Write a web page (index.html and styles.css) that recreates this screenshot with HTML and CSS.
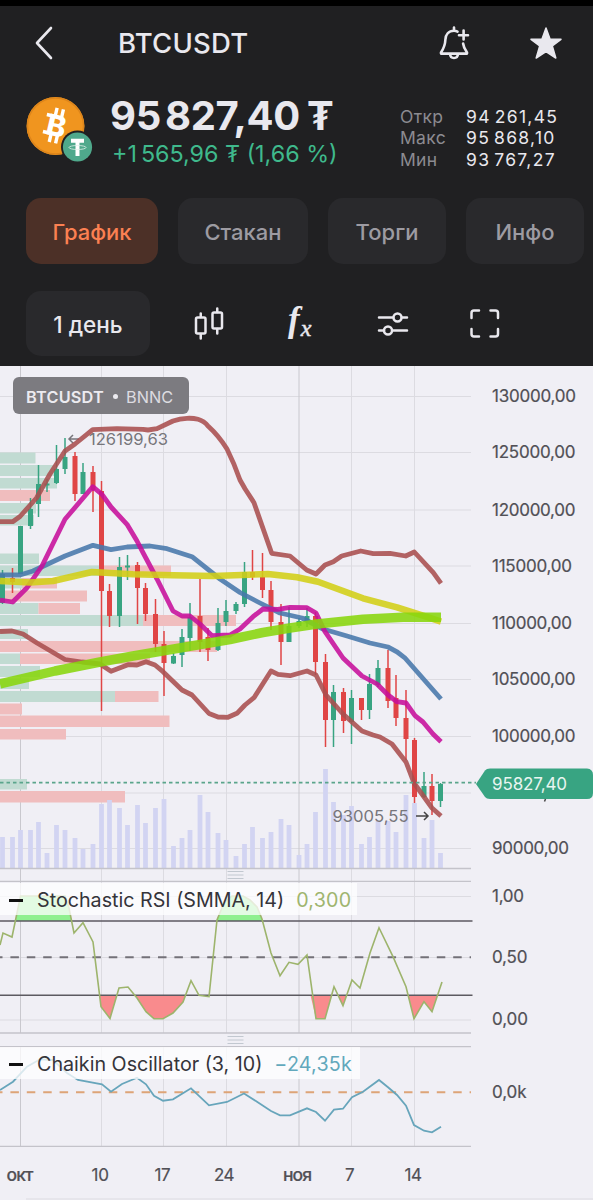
FILE: index.html
```html
<!DOCTYPE html>
<html lang="ru">
<head>
  <meta charset="UTF-8" />
  <meta name="viewport" content="width=device-width, initial-scale=1.0"/>
  <title>BTCUSDT</title>
  <link rel="stylesheet" href="styles.css">
</head>
<body>

<header class="header">
  <div class="topbar">
    <svg class="back" width="20" height="36" viewBox="0 0 20 36"><path d="M17 3L3 18L17 33"/></svg>
    <h1>BTCUSDT</h1>
    <svg class="bell" width="32" height="36" viewBox="0 0 32 36">
      <path d="M16 2.500V5M19.500 6.600C18.400 6 17.200 5.700 16 5.700C10.500 5.700 7.600 9.600 7.400 14.500C7.200 20.500 5.600 23.600 3 27.500V28.600H29V27.500C26.900 24.600 25.500 22 25.100 18.500M12 29C12.200 31.500 13.700 33 16 33C18.300 33 19.800 31.500 20 29M25.600 5.500V14.500M21 10.300H30"/>
    </svg>
    <svg class="star" width="34" height="34" viewBox="0 0 34 34"><path d="M17 2L21 13L32 13.300L23.300 20L26.800 32L17 25.500L7.200 32L10.700 20L2 13.300L13 13Z"/></svg>
  </div>

  <div class="quote">
    <svg class="coin" width="68" height="68" viewBox="0 0 68 68">
      <circle cx="29.500" cy="30" r="29" fill="#f0951f"/>
      <circle cx="29.500" cy="30" r="28" fill="none" stroke="#dd851b" stroke-width="1.500"/>
      <g transform="rotate(13 29.500 30)">
        <text class="btc" x="30.500" y="40">B</text>
        <path d="M27 12V20M33.500 12V20M27 38V47M33.500 38V47" stroke="#fff" stroke-width="3.400"/>
        <path d="M18.500 20.800H25M18.500 38.200H25" stroke="#fff" stroke-width="3.600"/>
      </g>
      <circle cx="51.500" cy="51" r="16.500" fill="#202022"/>
      <circle cx="51.500" cy="51" r="14.600" fill="#4fa98c"/>
      <path d="M45 44.800H58M51.500 44.800V60" stroke="#fff" stroke-width="4"/>
      <ellipse cx="51.500" cy="51.500" rx="8.500" ry="2" fill="none" stroke="#e3f3ee" stroke-width="0.800"/>
    </svg>
    <div class="price">
      <div class="last">95<i></i>827,40<i></i><span>₮</span></div>
      <div class="change">+1<i></i>565,96 ₮ (1,66 %)</div>
    </div>
    <dl class="stats">
      <dt>Откр</dt><dd>94<i></i>261,45</dd>
      <dt>Макс</dt><dd>95<i></i>868,10</dd>
      <dt>Мин</dt><dd>93<i></i>767,27</dd>
    </dl>
  </div>

  <nav class="tabs">
    <a class="tab tab-chart active">График</a>
    <a class="tab tab-book">Стакан</a>
    <a class="tab tab-trades">Торги</a>
    <a class="tab tab-info">Инфо</a>
  </nav>

  <div class="toolbar">
    <button class="period">1 день</button>
    <svg width="34" height="36" viewBox="0 0 34 36">
      <rect x="4" y="11.500" width="9.500" height="16" rx="1.500"/><path d="M8.750 7.500V11M8.750 28V32.500"/>
      <rect x="20.500" y="6.500" width="9.500" height="16" rx="1.500"/><path d="M25.250 2.500V6M25.250 23V27.500"/>
    </svg>
    <span class="fx"><em>f</em><sub>x</sub></span>
    <svg width="32" height="36" viewBox="0 0 32 36">
      <path d="M2 11.500H16M25 11.500H30M2 24.500H7M16 24.500H30"/><circle cx="20.500" cy="11.500" r="4"/><circle cx="11" cy="24.500" r="4"/>
    </svg>
    <svg width="32" height="36" viewBox="0 0 32 36">
      <path d="M2.500 12V7C2.500 5.500 3.500 4.500 5 4.500H10M21.500 4.500H26.500C28 4.500 29 5.500 29 7V12M29 23V28C29 29.500 28 30.500 26.500 30.500H21.500M10 30.500H5C3.500 30.500 2.500 29.500 2.500 28V23"/>
    </svg>
  </div>
</header>

<main class="chart">
  <section class="pane">
    <svg class="plot" width="593" height="516" viewBox="0 366 593 516">
      <path class="grid" d="M101.500 366V882M163.500 366V882M226.500 366V882M351.500 366V882M414.500 366V882M0 396.500H471M0 452.500H471M0 510H471M0 566H471M0 623.500H471M0 679.500H471M0 736.500H471M0 793H471M0 848.500H471"/>
      <path class="grid month" d="M20.500 366V882M299 366V882"/>

      <!-- volume profile -->
      <path class="profile up" d="M0 452.500h35.500v11h-35.500zM0 465h55v11h-55zM0 478h57v10.500h-57zM0 503h36v10.500h-36zM0 515h34v10.500h-34zM0 553.500h39v10.500h-39zM0 565.500h100v10.500h-100zM0 578h22v10.500h-22zM0 603h38.500v11h-38.500zM0 615h143v11h-143zM0 629h28v10h-28zM0 653.500h20v10.500h-20zM0 666h40v11h-40zM0 678.500h29v10.500h-29zM0 691h115v11h-115zM0 779h27v10.500h-27z"/>
      <path class="profile down" d="M0 490h50v11h-50zM100 565.500h71v10.500h-71zM22 578h35v10.500h-35zM0 590.500h87v11h-87zM38.500 603h41.500v11h-41.500zM143 615h93v11h-93zM0 641h217v11h-217zM20 653.500h130v10.500h-130zM115 691h43.500v11h-43.500zM0 703.500h22v11h-22zM0 715.500h169.500v11.500h-169.500zM0 729h66v10.500h-66zM0 791h125v11.500h-125z"/>

      <!-- volume -->
      <path class="volume" d="M2.500 868V837M12.500 868V837M20.500 868V830M30.500 868V830M38.500 868V822M47 868V853M56.500 868V825M65 868V830M75 868V838M83 868V849M93 868V844M101.500 868V804M109.500 868V800M119.500 868V808M127.500 868V825M137.500 868V805M145.500 868V823M155.500 868V808M164 868V799M173.500 868V846M182 868V838M190 868V830M200 868V795M208 868V812M218 868V833M226 868V840M236 868V856M244.500 868V844M252.500 868V827M262.500 868V838M271 868V832M281 868V819M289 868V825M299 868V855M307 868V844M315.500 868V812M325.500 868V769M333.500 868V802M343.500 868V815M351.500 868V806M361.500 868V844M369.500 868V837M378 868V821M388 868V821M396 868V832M406 868V795M414.500 868V803M424 868V838M432 868V820M440.500 868V853"/>

      <!-- candles -->
      <path class="wick up" d="M2.500 570V604M30.500 498V529M38.500 465V517M47 479V492M56.500 445V484M65 438V474M83 463V494M119.500 557V627M127.500 555V580M173.500 653V664M182 629V667M190 603V651M218 608V651M226 600V626M236 602V614M244.500 562V607M289 607V642M299 618V628M307 608V627M333.500 685V747M351.500 690V744M369.500 674V719M378 660V687M424 772V798M440.500 783V807"/>
      <path class="body up" d="M2.500 574V603M20.500 526V574M30.500 509V526M38.500 484V504M47 483.500V485.500M56.500 469V483M65 457V469M83 472V494M119.500 567V616M127.500 565.500V567.500M173.500 656V663.500M182 637V655M190 617V638M218 623V650M226 611V622M236 604V611M244.500 572V604M289 626V642M299 621V626M307 616V621M333.500 692V720M351.500 698V722M369.500 684V710M378 668V685M424 786V797M440.500 784V801"/>
      <path class="wick down" d="M12.500 568V593M75 452V501M93 466V512M101.500 481V711M109.500 584V627M137.500 562V624M145.500 583V621M155.500 599V652M164 631V696M200 579V652M208 628V661M252.500 550V580M262.500 553V598M271 581V630M281 604V665M315.500 612V675M325.500 654V747M343.500 688V733M361.500 698V720M388 650V708M396 675V726M406 690V760M414.500 738V803M432 774V815"/>
      <path class="body down" d="M12.500 578V582M75 456V494M93 472V490M101.500 491V591M109.500 591V616M137.500 565V588M145.500 588V614M155.500 614V644M164 644V663M200 616V642M208 637V650M252.500 572V577M262.500 577V590M271 590V622M281 622V642M315.500 616V662M325.500 662V720M343.500 692V721M361.500 698V710M388 668V701M396 698V718M406 718V739M414.500 740V797M432 786V801"/>

      <!-- high / low marks -->
      <text class="mark" x="89" y="445" textLength="79" lengthAdjust="spacingAndGlyphs">126199,63</text>
      <path class="arrow" d="M79 439H69M73 435L69 439L73 443"/>
      <text class="mark" x="332.500" y="821.500" textLength="76" lengthAdjust="spacingAndGlyphs">93005,55</text>
      <path class="arrow dark" d="M416 816H428M424 812L428 816L424 820"/>

      <!-- bands and averages -->
      <path class="band" d="M0 521.700L12.700 521.700L20 516.500L36.500 498L50 474L65 451L75 444L92.700 429.700L117 428.700L143 429.300L148 430L157 428.700L173 421Q180 418.500 187 418.300Q193 418 198 419.300Q204 421 208 426Q219 436 227 449Q234 463 240 480L245 488.700L254 502.700L271.700 553.300L290 556L306.700 570L316 574L325 565L333.300 561.700L341.700 556L360.700 551L373.300 553.700L390 553.300L405.700 556L414.300 552L433.300 572.700L441 583.300"/>
      <path class="band" d="M0 631.500L12 631L23 634L37 643L65 659.500L82 662L100 664L111 671.300L128 664.700L137 665L146 661.700L155 665L163 671.700L182 690L192 695L209 713.500L218 717L228 717.300L237 713.300L245 705L254 697.700L271 671L278 674.300L290 675.700L307 671L316 675L326 695L343 714L362 731L373 735L380 737L392 744L406 762L414 783L432 808L441 816"/>
      <path class="ma-blue" d="M0 575H20L33 571L65 556L93 545.300L111 549.700L127 547L150 546L167 548.700L192 556.700L220 579L240 592.500L260 603L280 613L302 618L323 629L347 636L370 643L388 647Q397 651 405 658L441 699"/>
      <path class="ma-magenta" d="M0 600L12.700 602L27 587.700L42 566L65 519.300L92.700 486.700L102 494.300L111 507L127 524.300L137 541L143 552.700L157 579L173 611L182 616L190 616L200 624L212 635.700L230 635L240 629L253 616.700L263 609L278 609.300L290 607.300L307 607.700L316 613L325 631.700L343 658L362 676L377 684L388 695L397 701.700L406 703L415 715.700L423 722L433 734L441 741.700"/>
      <path class="ma-yellow" d="M0 581L30 582.500L53 581L92 572L133 574.300L173 575.300L213 576L268 574L297 577.300L318 581.700L363 598.300L397 607.300L423 615.700L441 621.700"/>
      <path class="ma-green" d="M0 684L55 671L100 662L133 656L187 646.700L230 639.500L263 632.500L290 628L317 624L363 619.300L403 617.300L441 617.300"/>

      <path class="last-line" d="M0 782.700H476"/>
      <path class="border" d="M0 868.500H471M0 881.500H471"/>
      <path class="handle" d="M227.500 871.500H243.500M227.500 875H243.500M227.500 878.500H243.500"/>

      <g class="axis">
        <text x="492" y="402" textLength="84">130000,00</text>
        <text x="492" y="458" textLength="83.500">125000,00</text>
        <text x="492" y="515.500" textLength="83.500">120000,00</text>
        <text x="492" y="571.500" textLength="80">115000,00</text>
        <text x="492" y="629" textLength="80">110000,00</text>
        <text x="492" y="685" textLength="83.500">105000,00</text>
        <text x="492" y="742" textLength="83.500">100000,00</text>
        <text x="492" y="854" textLength="77">90000,00</text>
      </g>
      <path class="tag" d="M476 784L485 770.500Q486.500 768.500 490 768.500H587Q593 769 593 775V793Q593 799 587 799H490Q486.500 799 485 797Z"/>
      <path class="arrow dark" d="M545.500 799L544.500 801.500"/>
      <text class="tag-text" x="492" y="790" textLength="75">95827,40</text>
    </svg>
    <div class="symbol"><b>BTCUSDT</b><span class="dot"></span>BNNC</div>
  </section>

  <section class="pane">
    <svg class="plot" width="593" height="164" viewBox="0 882 593 164">
      <path class="grid" d="M101.500 882V1033M163.500 882V1033M226.500 882V1033M351.500 882V1033M414.500 882V1033M0 896.500H471M0 957.500H471M0 1020H471"/>
      <path class="grid month" d="M20.500 882V1033M299 882V1033"/>
      <clipPath id="over"><rect x="0" y="882" width="480" height="39"/></clipPath>
      <clipPath id="under"><rect x="0" y="995" width="480" height="40"/></clipPath>
      <path class="overbought" clip-path="url(#over)" d="M0 921V945L3 933L12 937L17 913L20.500 896H65L69 908L74 933L83 923V940H209L217 920L224 903L232 896H243L250 900L257 907L262 919L271 953V921Z"/>
      <path class="oversold" clip-path="url(#under)" d="M93 942L101 1006.700L110 1018.500L119 988L128 987L137 998L146 1011.700L154 1018.700H163L173 1013L183 1002L191 980.700H307L316 1018.700H325L334 986.700L343 1005.700L352 980H404L414 1018.700L424 1001.700L432 1011.700L442 982V942Z"/>
      <path class="level" d="M0 921H472.500M0 995.300H472.500"/>
      <path class="level mid" d="M-6 957.200H471"/>
      <path class="rsi" d="M0 945L3 933L12 937L17 913L20.500 896H65L69 908L74 933L83 922.700L93 942L101 1006.700L110 1018.500L119 988L128 987L137 998L146 1011.700L154 1018.700H163L173 1013L183 1002L191 980.700L199 995.300L209 996.700L217 920L224 903L232 896H243L250 900L257 907L262 919L271 953L280 975.700L289 962.300L298 964.300L307 955L316 1018.700H325L334 986.700L343 1005.700L352 980L360 988L370 953L379 927.700L393 956.700L406 986.700L414 1018.700L424 1001.700L432 1011.700L442 982"/>
      <path class="border" d="M0 1033H471"/>
      <path class="handle" d="M227.500 1036.500H243.500M227.500 1040H243.500M227.500 1043.500H243.500"/>
      <g class="axis">
        <text x="492" y="901.500" textLength="32">1,00</text>
        <text x="492" y="962.500" textLength="35.500">0,50</text>
        <text x="492" y="1025" textLength="36">0,00</text>
      </g>
    </svg>
    <div class="legend legend-rsi"><span class="dash"></span><span class="name">Stochastic RSI (SMMA, 14)</span><span class="value">0,300</span></div>
  </section>

  <section class="pane">
    <svg class="plot" width="593" height="101" viewBox="0 1046 593 101">
      <path class="grid" d="M101.500 1046V1146M163.500 1046V1146M226.500 1046V1146M351.500 1046V1146M414.500 1046V1146"/>
      <path class="grid month" d="M20.500 1046V1146M299 1046V1146"/>
      <path class="zero" d="M-6 1092.200H471"/>
      <path class="chaikin" d="M0 1090L13 1081.700L27 1066.700L40 1059.300L53 1060L67 1073L78 1080L102 1084.300L111 1091.700L122 1084L137 1077.700L146 1084.300L154 1095.700L163 1100.700L173 1099.300L191 1088.300L209 1105.300L227 1102L244 1093.500L257 1101.700L271 1111L280 1115.300H290L307 1108.300L316 1112L325 1120.700L334 1109.700L343 1108.700L352 1097.300L363 1091.700L379 1080L388 1087.300L397 1095L406 1105.700L414 1125L424 1130.700L432 1132.300L441 1126.700"/>
      <path class="border" d="M0 1046.500H471M0 1146.500H471"/>
      <g class="axis"><text x="492" y="1098" textLength="34.500">0,0k</text></g>
    </svg>
    <div class="legend legend-chaikin"><span class="dash"></span><span class="name">Chaikin Oscillator (3, 10)</span><span class="value">−24,35k</span></div>
  </section>

  <svg class="plot dates" width="593" height="53" viewBox="0 1147 593 53">
    <g class="axis">
      <text class="strong" x="6.500" y="1181" textLength="27">окт</text>
      <text x="91.500" y="1180.500" textLength="17.500">10</text>
      <text x="154.500" y="1180.500" textLength="16">17</text>
      <text x="214" y="1180.500" textLength="20.500">24</text>
      <text class="strong" x="283" y="1181" textLength="29">ноя</text>
      <text x="345" y="1180.500">7</text>
      <text x="404.500" y="1180.500" textLength="17.500">14</text>
    </g>
    <path class="grid" d="M26 1199H593"/>
  </svg>
</main>

</body>
</html>
```
FILE: styles.css
```css
* {
  box-sizing: border-box;
}
body {
  margin: 0;
  width: 593px;
  font-family: Inter, "Liberation Sans", sans-serif;
  background: #f0eff5;
}
svg {
  display: block;
  flex: none;
}

/* header */
.header {
  height: 366px;
  border-top: 6px solid #000;
  background: #202022;
  color: #e9e8ee;
}
.topbar {
  display: flex;
  align-items: center;
  height: 74px;
  padding: 0 29px 0 34px;
}
.topbar path {
  fill: none;
  stroke: #e9e8ee;
  stroke-width: 2.6;
  stroke-linecap: round;
  stroke-linejoin: round;
}
.topbar .star {
  margin-left: 59px;
}
.topbar .star path {
  fill: #e9e8ee;
  stroke-width: 1.5;
}
.topbar h1 {
  flex: none;
  width: 320px;
  margin: 0 0 0 64px;
  font-size: 27.500px;
  font-weight: 500;
  letter-spacing: 0.2px;
}
.quote {
  display: flex;
  height: 90px;
  padding: 16px 0 0 26px;
}
.btc {
  font-size: 29px;
  font-weight: 800;
  fill: #fff;
  text-anchor: middle;
}
.price {
  width: 290px;
  margin-left: 16px;
  white-space: nowrap;
}
.price i,
.stats i {
  display: inline-block;
  width: 4px;
}
.last {
  height: 40px;
  line-height: 40px;
  font-size: 40px;
  font-weight: 700;
  letter-spacing: -0.3px;
}
.last i + span {
  margin-left: 3px;
}
.change {
  margin-left: 2px;
  line-height: 36px;
  font-size: 23.300px;
}
.change {
  color: #3fb98c;
}
.stats {
  display: grid;
  grid-template-columns: 66px auto;
  align-content: start;
  margin: 10px 0 0;
  line-height: 21.300px;
  font-size: 17.500px;
  white-space: nowrap;
}
.stats dt {
  color: #8c8b91;
  letter-spacing: 0.3px;
}
.stats dd {
  margin: 0;
  letter-spacing: 1.300px;
}
.tabs {
  display: flex;
  gap: 20px;
  padding: 28px 9px 0 26px;
}
.tab {
  display: flex;
  align-items: center;
  justify-content: center;
  width: 118px;
  height: 66px;
  padding-top: 2px;
  border-radius: 15px;
  background: #29292c;
  color: #9d9ba2;
  font-size: 22px;
  font-weight: 500;
}
.tab-chart {
  width: 132px;
}
.tab-book {
  width: 130px;
}
.tab.active {
  background: #4c3027;
  color: #fb8052;
}
.toolbar {
  display: flex;
  align-items: center;
  height: 65px;
  margin-top: 27px;
  padding-left: 26px;
}
.period {
  width: 124px;
  height: 65px;
  margin-right: 42px;
  padding: 2px 0 0;
  border: none;
  border-radius: 15px;
  background: #29292c;
  color: #e9e8ee;
  font: 500 22.500px Inter, sans-serif;
}
.toolbar svg {
  fill: none;
  stroke: #e9e8ee;
  stroke-width: 2.500;
  stroke-linecap: round;
}
.fx {
  width: 30px;
  margin: 0 59px 0 62px;
  font-family: "Liberation Serif", serif;
  font-style: italic;
  font-weight: 700;
  line-height: 36px;
  white-space: nowrap;
}
.fx em {
  font-size: 35px;
}
.fx sub {
  margin-left: 1px;
  font-size: 24px;
  font-weight: 400;
  -webkit-text-stroke: 0.5px #e9e8ee;
  vertical-align: -5px;
}
.toolbar svg:last-child {
  margin-left: 60px;
}

/* chart */
.pane {
  position: relative;
}
.plot path {
  fill: none;
}
.plot .grid {
  stroke: #dcdbe1;
}
.plot .grid.month {
  stroke: #c9c8ce;
}
.plot .border {
  stroke: #c4c3ca;
  stroke-width: 1.300;
}
.plot .handle {
  stroke: #c2c8d0;
}
.plot .profile.up {
  fill: #c1dbd2;
}
.plot .profile.down {
  fill: #f0bdbe;
}
.plot .volume {
  stroke: #d2d4f2;
  stroke-width: 4.800;
}
.plot .wick {
  stroke-width: 1.500;
}
.plot .body {
  stroke-width: 5;
}
.plot .up {
  stroke: #38a482;
}
.plot .down {
  stroke: #e04545;
}
.plot .profile {
  stroke: none;
}
.band,
.ma-blue,
.ma-magenta,
.ma-yellow,
.ma-green {
  stroke-linejoin: round;
  stroke-width: 4.800;
  opacity: 0.88;
}
.band {
  stroke: #a94f4f;
}
.ma-blue {
  stroke: #4777ab;
}
.ma-magenta {
  stroke: #c60f9b;
}
.plot .ma-yellow {
  stroke: #d2cf16;
  stroke-width: 6.500;
}
.plot .ma-green {
  stroke: #88d60c;
  stroke-width: 9.500;
}
.mark {
  font-size: 16.500px;
  fill: #77767b;
}
.arrow {
  stroke: #77767b;
  stroke-width: 1.500;
}
.arrow.dark {
  stroke: #444;
}
.last-line {
  stroke: #5aa58b;
  stroke-width: 1.800;
  stroke-dasharray: 3.500 3;
}
.axis text {
  font-size: 17px;
  fill: #515056;
  stroke: #515056;
  stroke-width: 0.200;
}
.axis .strong {
  font-size: 17.500px;
  font-weight: 500;
}
.plot .tag {
  fill: #38a482;
}
.tag-text {
  font-size: 17px;
  fill: #e8f5f0;
}
.symbol {
  position: absolute;
  left: 13px;
  top: 11px;
  display: flex;
  align-items: center;
  width: 176px;
  height: 37px;
  padding: 2px 0 0 13px;
  border-radius: 6px;
  background: #7c7b80;
  color: #dddce1;
  font-size: 16.300px;
}
.symbol b {
  font-weight: 600;
  letter-spacing: 0.200px;
  color: #ecebf0;
}
.dot {
  width: 5px;
  height: 5px;
  margin: 0 8px 0 9px;
  border-radius: 50%;
  background: #ecebf0;
}
.plot .overbought {
  fill: #8ff08f;
}
.plot .oversold {
  fill: #f98b8d;
}
.level {
  stroke: #5c5a61;
  stroke-width: 1.600;
}
.level.mid {
  stroke: #737178;
  stroke-width: 1.900;
  stroke-dasharray: 8.500 7.900;
}
.rsi {
  stroke: #9db46c;
  stroke-width: 1.600;
}
.zero {
  stroke: #dda477;
  stroke-width: 2;
  stroke-dasharray: 8.500 7.900;
}
.chaikin {
  stroke: #67a5bb;
  stroke-width: 1.800;
}
.legend {
  position: absolute;
  left: 0;
  top: 1px;
  display: flex;
  align-items: center;
  width: 357px;
  height: 32px;
  padding: 2px 0 0 9px;
  background: rgba(255, 255, 255, 0.75);
  color: #35343a;
  font-size: 19.700px;
  white-space: nowrap;
}
.dash {
  width: 14px;
  height: 3px;
  margin-right: 14px;
  background: #111;
}
.value {
  margin-left: 12px;
  letter-spacing: 0.200px;
  color: #9fb56f;
}
.legend-chaikin {
  width: 360px;
}
.legend-chaikin .value {
  color: #62a8bc;
}
```
